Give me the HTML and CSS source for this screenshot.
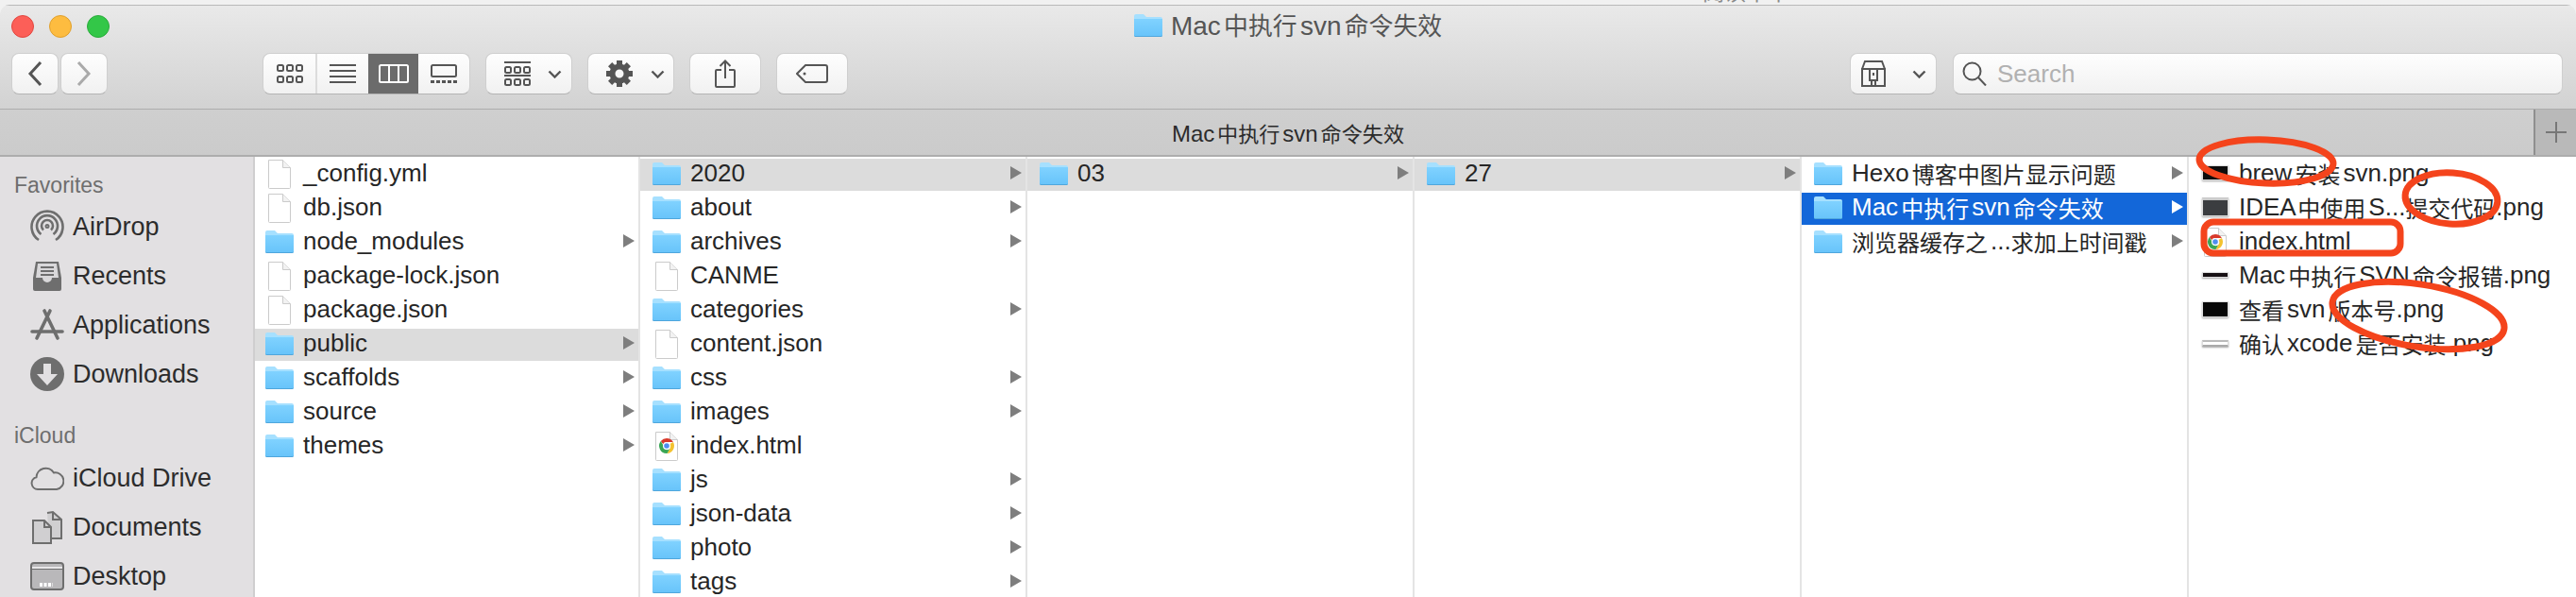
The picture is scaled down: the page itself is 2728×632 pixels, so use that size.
FILE: index.html
```html
<!DOCTYPE html>
<html lang="zh-CN">
<head>
    <meta charset="UTF-8">
    <title>Mac 中执行 svn 命令失效</title>
    <link rel="stylesheet" href="styles.css">
</head>
<body>
    <!-- shared icons -->
    <svg class="defs" width="0" height="0">
        <defs>
            <linearGradient id="folderFill" x1="0" y1="0" x2="0" y2="1">
                <stop offset="0" stop-color="#80d2ff"/>
                <stop offset="1" stop-color="#68c4fa"/>
            </linearGradient>
        </defs>
        <symbol id="folder" viewBox="0 0 30 34">
            <path fill="#a6e0ff" d="M0 6a2 2 0 0 1 2-2h8l3 3h15a2 2 0 0 1 2 2v5H0z"/>
            <path fill="#4fa6dc" d="M0 10h30v16.5a1.5 1.5 0 0 1-1.500 1.500h-27A1.500 1.500 0 0 1 0 26.500z"/>
            <path fill="url(#folderFill)" d="M0 9h30v17a1 1 0 0 1-1 1H1a1 1 0 0 1-1-1z"/>
        </symbol>
        <symbol id="doc" viewBox="0 0 30 34">
            <path fill="#fff" stroke="#cbcbcb" d="M3.500 1.500h15l8 8v21a1 1 0 0 1-1 1h-21a1 1 0 0 1-1-1z"/>
            <path fill="#f2f2f2" stroke="#cbcbcb" d="M18.500 1.500v8h8"/>
        </symbol>
        <symbol id="chrome" viewBox="0 0 30 34">
            <path fill="#fff" stroke="#cbcbcb" d="M3.500 1.500h15l8 8v21a1 1 0 0 1-1 1h-21a1 1 0 0 1-1-1z"/>
            <path fill="#f2f2f2" stroke="#cbcbcb" d="M18.500 1.500v8h8"/>
            <path fill="#d8392b" d="M15 8a8 8 0 0 1 6.900 4H15a4 4 0 0 0-3.600 2.300L8.800 11A8 8 0 0 1 15 8z"/>
            <path fill="#f3c22f" d="M21.900 12A8 8 0 0 1 15.500 24l3-5.200A4 4 0 0 0 18.400 14z"/>
            <path fill="#3aa655" d="M8.800 11A8 8 0 0 0 15.500 24l3-5.200a4 4 0 0 1-6.900-3.100z"/>
            <circle cx="15" cy="16" r="3.400" fill="#4d8df0" stroke="#fff" stroke-width="1.200"/>
        </symbol>
        <symbol id="chevron" viewBox="0 0 15 9">
            <path d="M1.500 1.500l6 6 6-6" fill="none" stroke="#555" stroke-width="2.400"/>
        </symbol>
    </svg>

    <div class="backdrop">
        <span class="backdrop-text">阅读十十 29</span>
    </div>

    <div class="window">
        <header class="titlebar">
            <div class="title-row">
                <div class="lights">
                    <span class="light red"></span>
                    <span class="light yellow"></span>
                    <span class="light green"></span>
                </div>
                <div class="title">
                    <svg class="title-folder" width="30" height="34"><use href="#folder"/></svg>
                    <span>Mac <span class="zh">中执行</span> svn <span class="zh">命令失效</span></span>
                </div>
                <div></div>
            </div>
            <div class="toolbar">
                <div class="nav">
                    <button class="btn nav-btn">
                        <svg width="16" height="28" viewBox="0 0 16 28"><path d="M14 2L3 14l11 12" fill="none" stroke="#555" stroke-width="3"/></svg>
                    </button>
                    <button class="btn nav-btn">
                        <svg width="16" height="28" viewBox="0 0 16 28"><path d="M2 2l11 12L2 26" fill="none" stroke="#aaa" stroke-width="3"/></svg>
                    </button>
                </div>
                <div class="btn views">
                    <div class="view view-first">
                        <svg width="28" height="20" viewBox="0 0 28 20" fill="none" stroke="#555" stroke-width="2">
                            <rect x="1" y="1" width="6" height="6" rx="1.500"/><rect x="11" y="1" width="6" height="6" rx="1.500"/><rect x="21" y="1" width="6" height="6" rx="1.500"/>
                            <rect x="1" y="13" width="6" height="6" rx="1.500"/><rect x="11" y="13" width="6" height="6" rx="1.500"/><rect x="21" y="13" width="6" height="6" rx="1.500"/>
                        </svg>
                    </div>
                    <div class="view">
                        <svg width="28" height="20" viewBox="0 0 28 20" stroke="#555" stroke-width="2"><path d="M0 1h28M0 7h28M0 13h28M0 19h28"/></svg>
                    </div>
                    <div class="view view-on">
                        <svg width="32" height="20" viewBox="0 0 32 20" fill="none" stroke="#fff" stroke-width="2"><rect x="1" y="1" width="30" height="18" rx="1.500"/><path d="M11 1v18M21 1v18"/></svg>
                    </div>
                    <div class="view">
                        <svg width="28" height="20" viewBox="0 0 28 20" fill="none" stroke="#555" stroke-width="2"><rect x="1" y="1" width="26" height="12" rx="1.500"/><path d="M0 18.500h28" stroke-width="3" stroke-dasharray="4 2"/></svg>
                    </div>
                </div>
                <button class="btn menu-btn group-btn">
                    <svg width="28" height="26" viewBox="0 0 28 26" fill="none" stroke="#555" stroke-width="2">
                        <path d="M0 1h28M0 15h28"/>
                        <rect x="1" y="6" width="6" height="6" rx="1.500"/><rect x="11" y="6" width="6" height="6" rx="1.500"/><rect x="21" y="6" width="6" height="6" rx="1.500"/>
                        <rect x="1" y="19" width="6" height="6" rx="1.500"/><rect x="11" y="19" width="6" height="6" rx="1.500"/><rect x="21" y="19" width="6" height="6" rx="1.500"/>
                    </svg>
                    <svg width="15" height="9"><use href="#chevron"/></svg>
                </button>
                <button class="btn menu-btn gear-btn">
                    <svg width="28" height="28" viewBox="0 0 28 28" fill="#555">
                        <circle cx="14" cy="14" r="7.500" fill="none" stroke="#555" stroke-width="6"/>
                        <g>
                            <rect x="11" y="0" width="6" height="6"/><rect x="11" y="22" width="6" height="6"/>
                            <rect x="0" y="11" width="6" height="6"/><rect x="22" y="11" width="6" height="6"/>
                        </g>
                        <g transform="rotate(45 14 14)">
                            <rect x="11" y="0" width="6" height="6"/><rect x="11" y="22" width="6" height="6"/>
                            <rect x="0" y="11" width="6" height="6"/><rect x="22" y="11" width="6" height="6"/>
                        </g>
                    </svg>
                    <svg width="15" height="9"><use href="#chevron"/></svg>
                </button>
                <button class="btn icon-btn">
                    <svg width="22" height="30" viewBox="0 0 22 30" fill="none" stroke="#555" stroke-width="2">
                        <path d="M7 11H2a1 1 0 0 0-1 1v16a1 1 0 0 0 1 1h18a1 1 0 0 0 1-1V12a1 1 0 0 0-1-1h-5M11 20V2M5.500 7L11 1.500 16.500 7"/>
                    </svg>
                </button>
                <button class="btn icon-btn">
                    <svg width="34" height="20" viewBox="0 0 34 20" fill="none" stroke="#555" stroke-width="2">
                        <path d="M10 1h21a2 2 0 0 1 2 2v14a2 2 0 0 1-2 2H10L1 10z"/>
                        <circle cx="9" cy="10" r="1.500" fill="#555" stroke="none"/>
                    </svg>
                </button>
                <div class="toolbar-gap"></div>
                <button class="btn menu-btn box-btn">
                    <svg width="26" height="28" viewBox="0 0 26 28" fill="none" stroke="#555" stroke-width="2">
                        <path d="M1 9l3-8h18l3 8M1 9h24v18H1zM9 9v12h8V9M11 21v6M15 21v6"/>
                        <rect x="12" y="13" width="2" height="3" fill="#555" stroke="none"/>
                    </svg>
                    <svg width="15" height="9"><use href="#chevron"/></svg>
                </button>
                <div class="btn search">
                    <svg width="26" height="26" viewBox="0 0 26 26" fill="none" stroke="#555" stroke-width="2"><circle cx="10.500" cy="10.500" r="9"/><path d="M17 17l8 8.500"/></svg>
                    <span>Search</span>
                </div>
            </div>
        </header>

        <div class="tabbar">
            <div class="tab-title">Mac <span class="zh">中执行</span> svn <span class="zh">命令失效</span></div>
            <div class="tab-add">
                <svg width="22" height="22" viewBox="0 0 22 22" stroke="#777" stroke-width="2"><path d="M11 0v22M0 11h22"/></svg>
            </div>
        </div>

        <div class="browser">
            <nav class="sidebar">
                <h4 class="side-head">Favorites</h4>
                <a class="side-item">
                    <svg width="36" height="36" viewBox="0 0 36 36" fill="none" stroke="#6e6e6e" stroke-width="2.600">
                        <path d="M9 32A16.500 16.500 0 1 1 27 32"/>
                        <path d="M11.500 26A11 11 0 1 1 24.500 26"/>
                        <path d="M14 21.500A6 6 0 1 1 22 21.500"/>
                        <circle cx="18" cy="17.500" r="1.500" stroke-width="2"/>
                    </svg>
                    AirDrop
                </a>
                <a class="side-item">
                    <svg width="36" height="36" viewBox="0 0 36 36">
                        <path fill="#6e6e6e" d="M6 3h24l3 17v12a2 2 0 0 1-2 2H5a2 2 0 0 1-2-2V20z"/>
                        <path fill="#d9d8da" d="M8 5h20l2 15h-7a5 5 0 0 1-10 0H6z"/>
                        <path stroke="#6e6e6e" stroke-width="2" d="M11 9h14M11 13h14M11 17h14"/>
                    </svg>
                    Recents
                </a>
                <a class="side-item">
                    <svg width="36" height="36" viewBox="0 0 36 36" fill="none" stroke="#6e6e6e" stroke-linecap="round">
                        <path stroke-width="3.600" d="M15 3l14 29M21 3L7 32"/>
                        <path stroke-width="3.600" d="M2 25h32"/>
                    </svg>
                    Applications
                </a>
                <a class="side-item">
                    <svg width="36" height="36" viewBox="0 0 36 36">
                        <circle cx="18" cy="18" r="18" fill="#6e6e6e"/>
                        <path fill="#e2e0e2" d="M14 7h8v11h7L18 30 7 18h7z"/>
                    </svg>
                    Downloads
                </a>
                <h4 class="side-head side-head-next">iCloud</h4>
                <a class="side-item">
                    <svg width="36" height="26" viewBox="0 0 36 26" fill="none" stroke="#6e6e6e" stroke-width="2">
                        <path d="M8 25a6.500 6.500 0 0 1-1.500-12.800A10 10 0 0 1 25 7.500a8.800 8.800 0 0 1 3 17.500z"/>
                    </svg>
                    iCloud Drive
                </a>
                <a class="side-item">
                    <svg width="36" height="36" viewBox="0 0 36 36" stroke="#6e6e6e" stroke-width="2" fill="#d0cfd1">
                        <path d="M18 3l6-1 9 8v20H20"/>
                        <path d="M3 11h12l7 7v17H3z"/>
                        <path d="M24 2v8h9M15 11v7h7" fill="none"/>
                    </svg>
                    Documents
                </a>
                <a class="side-item">
                    <svg width="36" height="30" viewBox="0 0 36 30">
                        <rect x="1" y="1" width="34" height="28" rx="3" fill="#b9b8ba" stroke="#6e6e6e" stroke-width="2"/>
                        <path fill="#e8e7e9" d="M2 5h32v2H2z"/>
                        <path fill="#6e6e6e" d="M2 7h32v1H2z"/>
                        <path stroke="#fff" stroke-width="4" stroke-dasharray="3 1.500" d="M10 24h14"/>
                    </svg>
                    Desktop
                </a>
            </nav>

            <div class="col col-first">
                <div class="row"><svg class="ico"><use href="#doc"/></svg>_config.yml</div>
                <div class="row"><svg class="ico"><use href="#doc"/></svg>db.json</div>
                <div class="row"><svg class="ico"><use href="#folder"/></svg>node_modules<i class="arrow"></i></div>
                <div class="row"><svg class="ico"><use href="#doc"/></svg>package-lock.json</div>
                <div class="row"><svg class="ico"><use href="#doc"/></svg>package.json</div>
                <div class="row path"><svg class="ico"><use href="#folder"/></svg>public<i class="arrow"></i></div>
                <div class="row"><svg class="ico"><use href="#folder"/></svg>scaffolds<i class="arrow"></i></div>
                <div class="row"><svg class="ico"><use href="#folder"/></svg>source<i class="arrow"></i></div>
                <div class="row"><svg class="ico"><use href="#folder"/></svg>themes<i class="arrow"></i></div>
            </div>

            <div class="col">
                <div class="row path"><svg class="ico"><use href="#folder"/></svg>2020<i class="arrow"></i></div>
                <div class="row"><svg class="ico"><use href="#folder"/></svg>about<i class="arrow"></i></div>
                <div class="row"><svg class="ico"><use href="#folder"/></svg>archives<i class="arrow"></i></div>
                <div class="row"><svg class="ico"><use href="#doc"/></svg>CANME</div>
                <div class="row"><svg class="ico"><use href="#folder"/></svg>categories<i class="arrow"></i></div>
                <div class="row"><svg class="ico"><use href="#doc"/></svg>content.json</div>
                <div class="row"><svg class="ico"><use href="#folder"/></svg>css<i class="arrow"></i></div>
                <div class="row"><svg class="ico"><use href="#folder"/></svg>images<i class="arrow"></i></div>
                <div class="row"><svg class="ico"><use href="#chrome"/></svg>index.html</div>
                <div class="row"><svg class="ico"><use href="#folder"/></svg>js<i class="arrow"></i></div>
                <div class="row"><svg class="ico"><use href="#folder"/></svg>json-data<i class="arrow"></i></div>
                <div class="row"><svg class="ico"><use href="#folder"/></svg>photo<i class="arrow"></i></div>
                <div class="row"><svg class="ico"><use href="#folder"/></svg>tags<i class="arrow"></i></div>
            </div>

            <div class="col">
                <div class="row path"><svg class="ico"><use href="#folder"/></svg>03<i class="arrow"></i></div>
            </div>

            <div class="col">
                <div class="row path"><svg class="ico"><use href="#folder"/></svg>27<i class="arrow"></i></div>
            </div>

            <div class="col">
                <div class="row"><svg class="ico"><use href="#folder"/></svg>Hexo <span class="zh">博客中图片显示问题</span><i class="arrow"></i></div>
                <div class="row selected"><svg class="ico"><use href="#folder"/></svg>Mac <span class="zh">中执行</span> svn <span class="zh">命令失效</span><i class="arrow"></i></div>
                <div class="row"><svg class="ico"><use href="#folder"/></svg><span class="zh">浏览器缓存之</span> ...<span class="zh">求加上时间戳</span><i class="arrow"></i></div>
            </div>

            <div class="col col-last">
                <div class="row"><span class="ico thumb thumb-brew"></span>brew <span class="zh">安装</span> svn.png</div>
                <div class="row"><span class="ico thumb thumb-idea"></span>IDEA <span class="zh">中使用</span> S...<span class="zh">提交代码</span>.png</div>
                <div class="row"><svg class="ico"><use href="#chrome"/></svg>index.html</div>
                <div class="row"><span class="ico thumb thumb-line"></span>Mac <span class="zh">中执行</span> SVN <span class="zh">命令报错</span>.png</div>
                <div class="row"><span class="ico thumb thumb-term"></span><span class="zh">查看</span> svn <span class="zh">版本号</span>.png</div>
                <div class="row"><span class="ico thumb thumb-pale"></span><span class="zh">确认</span> xcode <span class="zh">是否安装</span>.png</div>
            </div>
        </div>
    </div>

    <!-- red marks drawn over the screenshot -->
    <svg class="marks" width="2728" height="632" viewBox="0 0 2728 632" fill="none" stroke="#f4441c" stroke-width="7">
        <ellipse cx="2400" cy="171" rx="71" ry="23" transform="rotate(2 2400 171)"/>
        <ellipse cx="2596" cy="210" rx="49" ry="27" transform="rotate(4 2596 210)"/>
        <rect x="2334" y="235" width="208" height="33" rx="10"/>
        <ellipse cx="2561" cy="334" rx="92" ry="33" transform="rotate(9 2561 334)"/>
    </svg>
</body>
</html>
```

FILE: styles.css
```css
* {
    box-sizing: border-box;
}

html, body {
    margin: 0;
    height: 632px;
    overflow: hidden;
}

body {
    position: relative;
    background: #f1f1f1;
    font-family: "Liberation Sans", "Noto Sans CJK SC", sans-serif;
    color: #262626;
}

.defs {
    display: block;
    height: 0;
}

/* strip of the page behind the window */
.backdrop {
    height: 5px;
    overflow: hidden;
    padding-left: 1803px;
}

.backdrop-text {
    display: block;
    margin-top: -23px;
    font-size: 23px;
    line-height: 30px;
    color: #8a8a8a;
}

.window {
    height: 627px;
    border-radius: 10px 10px 0 0;
    overflow: hidden;
}

.zh {
    font-family: "Noto Sans CJK SC", sans-serif;
    font-size: 0.923em;
}

/* title and toolbar */
.titlebar {
    height: 111px;
    background: linear-gradient(#e9e9e9, #d2d2d2);
    border-top: 1px solid #b9b9b9;
    border-bottom: 1px solid #adadad;
}

.title-row {
    display: grid;
    grid-template-columns: 1fr auto 1fr;
    height: 44px;
    align-items: center;
}

.lights {
    display: flex;
    gap: 16px;
    padding-left: 12px;
}

.light {
    width: 24px;
    height: 24px;
    border-radius: 50%;
}

.red { background: #fc5f58; border: 1px solid #e2463f; }
.yellow { background: #fdbc40; border: 1px solid #e0a02c; }
.green { background: #33c748; border: 1px solid #2aab3b; }

.title {
    display: flex;
    align-items: center;
    gap: 9px;
    font-size: 28px;
    line-height: 30px;
    padding-bottom: 2px;
    word-spacing: -0.16em;
    color: #555;
}

.title-folder {
    margin-bottom: -2px;
}

.toolbar {
    display: flex;
    align-items: flex-start;
    padding: 6px 14px 0 12px;
}

.btn {
    height: 44px;
    padding: 0;
    background: linear-gradient(#fefefe, #f1f1f1);
    border: 1px solid #cfcfcf;
    border-bottom-color: #b4b4b4;
    border-radius: 8px;
    display: flex;
    align-items: center;
    justify-content: center;
}

.nav {
    display: flex;
    gap: 2px;
}

.nav-btn {
    width: 50px;
}

.views {
    width: 220px;
    margin-left: 164px;
    overflow: hidden;
    align-items: stretch;
}

.view {
    flex: 1;
    display: flex;
    align-items: center;
    justify-content: center;
}

.view-first {
    flex: 0 0 57px;
    border-right: 2px solid #dcdcdc;
}

.view-on {
    background: #6b6b6b;
}

.menu-btn {
    width: 92px;
    margin-left: 16px;
    justify-content: flex-start;
}

.group-btn { padding-left: 19px; gap: 18px; }
.gear-btn { padding-left: 19px; gap: 19px; }

.box-btn {
    margin-left: 0;
    padding-left: 11px;
    gap: 28px;
}

.icon-btn {
    width: 76px;
    margin-left: 16px;
}

.toolbar-gap {
    flex: 1;
}

.search {
    width: 646px;
    margin-left: 17px;
    justify-content: flex-start;
    gap: 11px;
    padding-left: 9px;
    font-size: 26px;
    color: #b1b1b1;
}

/* path bar */
.tabbar {
    height: 50px;
    display: flex;
    background: linear-gradient(#cfcfcf, #cbcbcb);
    border-bottom: 2px solid #adadad;
}

.tab-title {
    flex: 1;
    padding-left: 45px;
    text-align: center;
    font-size: 24px;
    line-height: 48px;
    word-spacing: -0.16em;
    color: #2b2b2b;
}

.tab-add {
    width: 45px;
    background: #b9b9b9;
    border-left: 2px solid #8f8f8f;
    display: flex;
    align-items: center;
    justify-content: center;
}

/* column browser */
.browser {
    display: flex;
    height: 466px;
    background: #fff;
}

.sidebar {
    flex: 0 0 270px;
    background: #e2e0e2;
    border-right: 2px solid #cfcecf;
    padding-top: 15px;
}

.side-head {
    margin: 0 0 3px;
    padding-left: 15px;
    font-size: 23px;
    font-weight: normal;
    line-height: 30px;
    color: #6e6e6e;
}

.side-head-next {
    margin: 24px 0 4px;
}

.side-item {
    height: 52px;
    display: flex;
    align-items: center;
    padding-left: 32px;
    gap: 9px;
    font-size: 27px;
    color: #2c2c2c;
}

.col {
    flex: 0 0 410px;
    padding-top: 2px;
    border-right: 2px solid #e4e4e4;
    overflow: hidden;
}

.col-first {
    flex-basis: 408px;
}

.col-last {
    flex: 1;
    border-right: 0;
}

.row {
    height: 34px;
    margin-bottom: 2px;
    padding: 0 4px 4px 13px;
    display: flex;
    align-items: center;
    font-size: 26px;
    white-space: pre;
    word-spacing: -0.16em;
}

.col-first .row {
    padding-left: 11px;
}

.ico {
    flex: none;
    width: 30px;
    height: 34px;
    margin-right: 10px;
    margin-bottom: -4px;
}

.path {
    background: #dcdcdc;
}

.selected {
    background: #1367d9;
    color: #fff;
}

.arrow {
    margin-left: auto;
    width: 0;
    height: 0;
    border-left: 12px solid #7e7e7e;
    border-top: 7px solid transparent;
    border-bottom: 7px solid transparent;
}

.selected .arrow {
    border-left-color: #fff;
}

/* image thumbnails in the last column */
.thumb {
    display: block;
    width: 28px;
    margin-left: 1px;
    margin-right: 11px;
    margin-bottom: 0;
    background: #000;
    border: 1px solid #ddd;
    box-shadow: 0 1px 2px rgba(0, 0, 0, 0.35);
}

.thumb-brew { height: 16px; background: #0c0c0c; }
.thumb-idea { height: 20px; background: #3b3d40; border-top: 3px solid #ccc; }
.thumb-line { height: 6px; background: #161013; }
.thumb-term { height: 17px; background: #060606; }
.thumb-pale { height: 7px; background: #fff; border-top: 2px solid #bbb; border-bottom: 2px solid #aaa; }

.marks {
    position: absolute;
    left: 0;
    top: 0;
    pointer-events: none;
}
```
